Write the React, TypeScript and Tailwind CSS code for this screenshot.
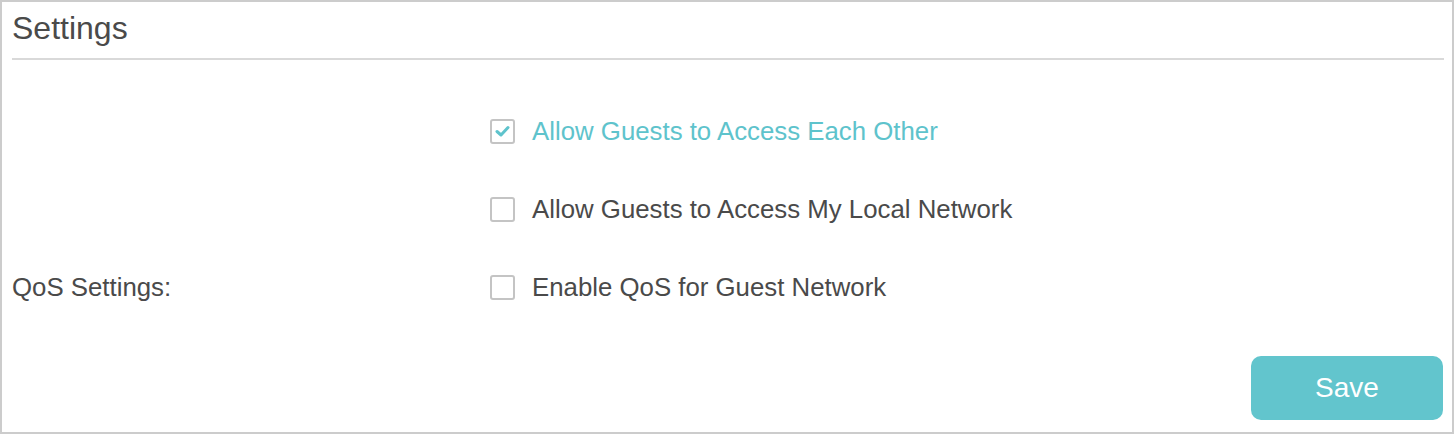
import React from "react";

function Box({ checked }: { checked?: boolean }) {
  return (
    <span className="w-[25px] h-[25px] border-2 border-[#c4c4c4] rounded-[3px] flex items-center justify-center bg-white shrink-0">
      {checked && (
        <svg width="15" height="12" viewBox="0 0 15 12">
          <path d="M2 6.5 L6 10 L13 2.5" fill="none" stroke="#5ec3cc" strokeWidth="3" strokeLinecap="round" strokeLinejoin="round" />
        </svg>
      )}
    </span>
  );
}

function Row({ label, text, checked }: { label?: string; text: string; checked?: boolean }) {
  return (
    <div className="flex items-center h-[78px]">
      <div className="w-[478px] text-[25.8px] text-[#4a4a4a]">{label}</div>
      <div className="flex items-center gap-[17px]">
        <Box checked={checked} />
        <span className={`text-[25.8px] ${checked ? "text-[#5ec3cc]" : "text-[#4a4a4a]"}`}>{text}</span>
      </div>
    </div>
  );
}

export default function App() {
  return (
    <div
      className="w-[1454px] h-[434px] border-2 border-[#cccccc] bg-white pl-[10px] pr-[8px] flex flex-col"
      style={{ fontFamily: '"Liberation Sans", Arial, sans-serif' }}
    >
      <div className="h-[58px] border-b-2 border-[#d9d9d9] flex items-start">
        <span className="text-[32px] leading-none text-[#4a4a4a] mt-[10px]">Settings</span>
      </div>
      <div className="mt-[32px] flex flex-col">
        <Row text="Allow Guests to Access Each Other" checked />
        <Row text="Allow Guests to Access My Local Network" />
        <Row label="QoS Settings:" text="Enable QoS for Guest Network" />
      </div>
      <div className="flex justify-end mt-[30px] pr-[1px]">
        <button className="w-[192px] h-[64px] rounded-[10px] bg-[#62c5cd] text-white text-[28px]">Save</button>
      </div>
    </div>
  );
}
